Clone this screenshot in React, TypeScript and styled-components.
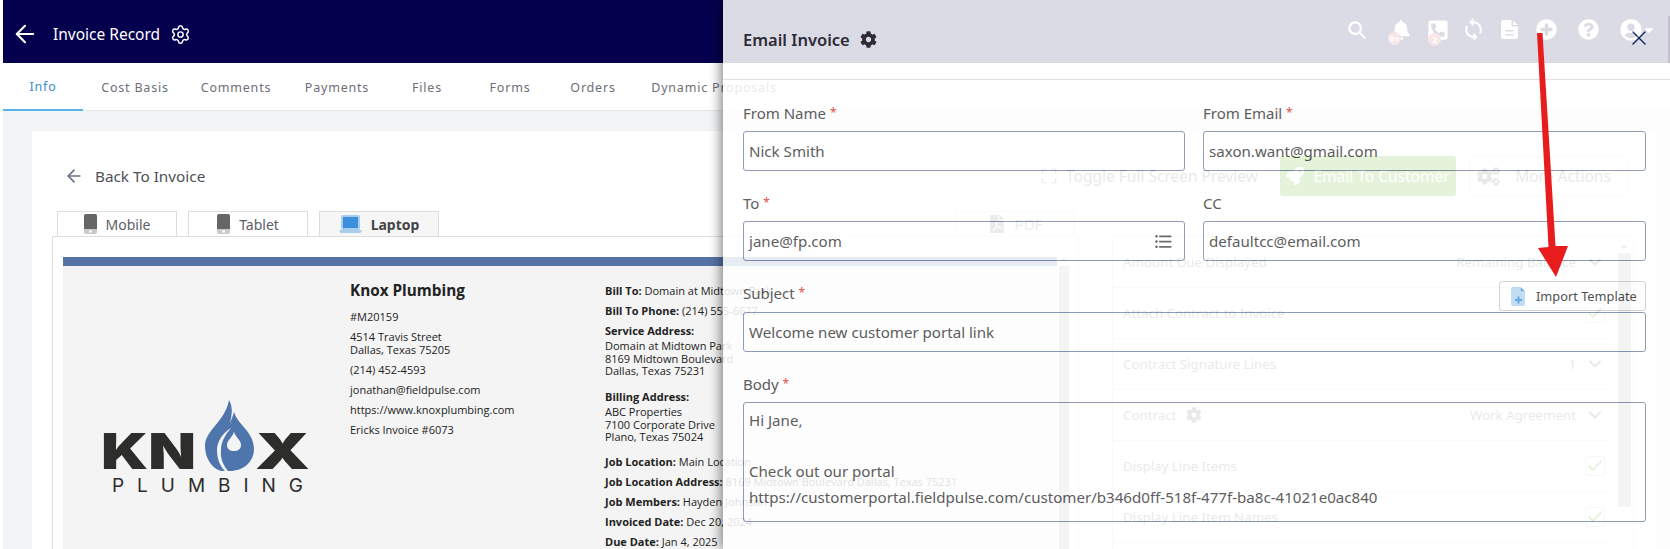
import styled, { createGlobalStyle } from "styled-components";
import { Settings, ArrowLeft, X, Check, ChevronDown, Maximize } from "lucide-react";
import { FaBell, FaCog, FaCogs, FaPhoneSquareAlt, FaPlusCircle, FaQuestionCircle, FaRocket, FaUserCircle, FaCaretDown, FaFilePdf } from "react-icons/fa";
import { MdFormatListBulleted, MdSync } from "react-icons/md";

const UI_FONT = `"Noto Sans", "Open Sans", sans-serif`;
const DOC_FONT = `"Open Sans", "Noto Sans", sans-serif`;

const GlobalStyle = createGlobalStyle`
  html, body {
    margin: 0;
    padding: 0;
    background: #fff;
  }
  * {
    box-sizing: border-box;
  }
`;

const tabs = [
  { label: "Info", width: 80 },
  { label: "Cost Basis", width: 104 },
  { label: "Comments", width: 98 },
  { label: "Payments", width: 104 },
  { label: "Files", width: 76 },
  { label: "Forms", width: 90 },
  { label: "Orders", width: 76 },
  { label: "Dynamic Proposals", width: 166 },
];

const settingRows = [
  { label: "Amount Due Displayed", value: "Remaining Balance", kind: "select" },
  { label: "Attach Contract to Invoice", kind: "check" },
  { label: "Contract Signature Lines", value: "1", kind: "select" },
  { label: "Contract", value: "Work Agreement", kind: "select", gear: true },
  { label: "Display Line Items", kind: "check" },
  { label: "Display Line Item Names", kind: "check" },
];

function SearchIcon() {
  return (
    <svg width="18" height="18" viewBox="0 0 18 18" fill="none" stroke="#fff" strokeWidth="2.300" strokeLinecap="round">
      <circle cx="7.200" cy="7.200" r="5.800" />
      <path d="M11.500 11.500L16.800 16.800" />
    </svg>
  );
}

function NoteIcon() {
  return (
    <svg width="17" height="19" viewBox="0 0 17 19">
      <path
        fill="#fff"
        fillRule="evenodd"
        d="M2 0h8.500v5.500a1 1 0 0 0 1 1H17V17a2 2 0 0 1-2 2H2a2 2 0 0 1-2-2V2a2 2 0 0 1 2-2zM4.500 10v1.600h8V10zM4.500 14v1.600h8V14z"
      />
      <path fill="#fff" d="M12 0.500L16.700 5H12z" />
    </svg>
  );
}

function PhoneIcon() {
  return (
    <svg width="13" height="20" viewBox="0 0 13 20">
      <rect x="0" y="0" width="13" height="20" rx="2" fill="#c9c9c9" />
      <path d="M2 0h9a2 2 0 0 1 2 2v13H0V2a2 2 0 0 1 2-2z" fill="#666" />
      <rect x="5" y="16.500" width="3" height="2" fill="#fff" />
    </svg>
  );
}

function LaptopIcon() {
  return (
    <svg width="23" height="18" viewBox="0 0 23 18">
      <rect x="2" y="0" width="19" height="15" rx="2" fill="#a9cdec" />
      <rect x="4" y="2" width="15" height="11" fill="#3b8fdc" />
      <path d="M0 15h23l-1.500 3H1.500z" fill="#a9cdec" />
    </svg>
  );
}

function KnoxLogo() {
  return (
    <LogoSvg width="207" height="94" viewBox="0 0 207 94">
      <text x="-2" y="69" fontFamily="Inter, sans-serif" fontWeight="900" fontSize="49.500" fill="#2d2d2b" textLength="95" lengthAdjust="spacingAndGlyphs">KN</text>
      <text x="152" y="69" fontFamily="Inter, sans-serif" fontWeight="900" fontSize="49.500" fill="#2d2d2b" textLength="55" lengthAdjust="spacingAndGlyphs">X</text>
      <path
        d="M126 0C131 9 128 17 127 24C128 20 130 16 131 12C135 25 151 32 151 49C151 62 140 71 127 71L118 71C108 68 102 57 102 46C102 30 122 22 126 0Z"
        fill="#4e76ad"
      />
      <path d="M128 28C120 33 114 41 114 50C114 59 117 66 122 71L125 71C120 65 117 58 118 50C118 42 122 35 128 28Z" fill="#f4f4f4" />
      <path d="M131 32C133 38 138 40 138 45C138 49 135 51 131 51C127 51 124 49 124 45C124 40 129 38 131 32Z" fill="#f4f4f4" />
      <text x="9" y="92" fontFamily="Inter, sans-serif" fontWeight="400" fontSize="19" fill="#2d2d2b" textLength="191">PLUMBING</text>
    </LogoSvg>
  );
}

function ImportIcon() {
  return (
    <svg width="14" height="19" viewBox="0 0 14 19">
      <path d="M2 0h7v5h5v12a2 2 0 0 1-2 2H2a2 2 0 0 1-2-2V2a2 2 0 0 1 2-2z" fill="#b9d8f2" />
      <path d="M9.500 0L14 4.500H9.500z" fill="#4a9be0" />
      <path d="M6.500 9.500h2v2.500H11v2H8.500v2.500h-2V14H4v-2h2.500z" fill="#4a9be0" />
    </svg>
  );
}

export default function App() {
  return (
    <>
      <GlobalStyle />
      <Screen>
        <Page>
          <TopBar>
            <BackArrow><ArrowLeft size={28} color="#fff" strokeWidth={1.8} /></BackArrow>
            <TopTitle>Invoice Record</TopTitle>
            <Settings size={21} color="#fff" strokeWidth={1.7} />
            <TopIcons>
              <IconSlot $gap={0}><SearchIcon /></IconSlot>
              <IconSlot $gap={25}>
                <FaBell size={20} />
                <Badge $left={-3}>9+</Badge>
              </IconSlot>
              <IconSlot $gap={16}>
                <FaPhoneSquareAlt size={22} />
                <Badge $left={1}>2</Badge>
              </IconSlot>
              <IconSlot $gap={12}><MdSync size={25} /></IconSlot>
              <IconSlot $gap={15}><NoteIcon /></IconSlot>
              <IconSlot $gap={18}><FaPlusCircle size={21} /></IconSlot>
              <IconSlot $gap={21}><FaQuestionCircle size={21} /></IconSlot>
              <IconSlot $gap={21}>
                <FaUserCircle size={22} />
                <FaCaretDown size={14} />
              </IconSlot>
            </TopIcons>
          </TopBar>

          <TabBar>
            {tabs.map((t, i) => (
              <TabItem key={t.label} $active={i === 0} $width={t.width}>{t.label}</TabItem>
            ))}
          </TabBar>

          <Content>
            <Card>
              <TopRow>
                <BackLink>
                  <ArrowLeft size={20} color="#6b7280" strokeWidth={2} />
                  Back To Invoice
                </BackLink>
                <Actions>
                  <ToggleLink>
                    <Maximize size={18} strokeWidth={1.6} />
                    Toggle Full Screen Preview
                  </ToggleLink>
                  <EmailButton>
                    <FaRocket size={18} />
                    Email To Customer
                  </EmailButton>
                  <MoreButton>
                    <FaCogs size={23} />
                    More Actions
                  </MoreButton>
                </Actions>
              </TopRow>

              <Columns>
                <PreviewColumn>
                  <DeviceRow>
                    <DeviceTab><PhoneIcon />Mobile</DeviceTab>
                    <DeviceTab><PhoneIcon />Tablet</DeviceTab>
                    <DeviceTab $active><LaptopIcon />Laptop</DeviceTab>
                    <PdfTab><FaFilePdf size={18} />PDF</PdfTab>
                  </DeviceRow>
                  <PreviewBox>
                    <DocScroll>
                      <DocBar />
                      <Doc>
                        <LogoCell><KnoxLogo /></LogoCell>
                        <CompanyCell>
                          <CompanyName>Knox Plumbing</CompanyName>
                          <DocPara>#M20159</DocPara>
                          <DocPara>4514 Travis Street<br />Dallas, Texas 75205</DocPara>
                          <DocPara>(214) 452-4593</DocPara>
                          <DocPara>jonathan@fieldpulse.com</DocPara>
                          <DocPara>https://www.knoxplumbing.com</DocPara>
                          <DocPara>Ericks Invoice #6073</DocPara>
                        </CompanyCell>
                        <BillCell>
                          <DocPara><b>Bill To:</b> Domain at Midtown Park</DocPara>
                          <DocPara><b>Bill To Phone:</b> (214) 555-6677</DocPara>
                          <DocPara><b>Service Address:</b></DocPara>
                          <AddressPara>Domain at Midtown Park<br />8169 Midtown Boulevard<br />Dallas, Texas 75231</AddressPara>
                          <DocPara><b>Billing Address:</b></DocPara>
                          <AddressPara $tail={11}>ABC Properties<br />7100 Corporate Drive<br />Plano, Texas 75024</AddressPara>
                          <DocPara><b>Job Location:</b> Main Location</DocPara>
                          <DocPara><b>Job Location Address:</b> 8169 Midtown Boulevard Dallas, Texas 75231</DocPara>
                          <DocPara><b>Job Members:</b> Hayden Johnson</DocPara>
                          <DocPara><b>Invoiced Date:</b> Dec 20, 2024</DocPara>
                          <DocPara><b>Due Date:</b> Jan 4, 2025</DocPara>
                        </BillCell>
                      </Doc>
                    </DocScroll>
                    <DocScrollbar />
                  </PreviewBox>
                </PreviewColumn>

                <SettingsPanel>
                  {settingRows.map((r) => (
                    <SettingRow key={r.label}>
                      <SettingLabel>
                        {r.label}
                        {r.gear && <FaCog size={16} />}
                      </SettingLabel>
                      {r.kind === "check" ? (
                        <CheckBox><Check size={18} color="#62b000" strokeWidth={2.4} /></CheckBox>
                      ) : (
                        <SettingValue>
                          {r.value}
                          <ChevronDown size={20} strokeWidth={2.4} />
                        </SettingValue>
                      )}
                    </SettingRow>
                  ))}
                  <PanelScrollbar />
                </SettingsPanel>
              </Columns>
            </Card>
          </Content>
        </Page>

        <Drawer>
          <DrawerHead>
            <DrawerTitle>
              Email Invoice
              <FaCog size={17} />
            </DrawerTitle>
            <CloseButton><X size={24} strokeWidth={1.4} /></CloseButton>
          </DrawerHead>
          <Form>
            <FieldPair>
              <Field>
                <FieldLabel>From Name <Req>*</Req></FieldLabel>
                <InputBox>Nick Smith</InputBox>
              </Field>
              <Field>
                <FieldLabel>From Email <Req>*</Req></FieldLabel>
                <InputBox>saxon.want@gmail.com</InputBox>
              </Field>
            </FieldPair>
            <FieldPair>
              <Field>
                <FieldLabel>To <Req>*</Req></FieldLabel>
                <InputBox>
                  jane@fp.com
                  <MdFormatListBulleted size={21} color="#555" />
                </InputBox>
              </Field>
              <Field>
                <FieldLabel>CC</FieldLabel>
                <InputBox>defaultcc@email.com</InputBox>
              </Field>
            </FieldPair>
            <Field>
              <SubjectHead>
                <FieldLabel>Subject <Req>*</Req></FieldLabel>
                <ImportButton>
                  <ImportIcon />
                  Import Template
                </ImportButton>
              </SubjectHead>
              <InputBox>Welcome new customer portal link</InputBox>
            </Field>
            <Field>
              <FieldLabel>Body <Req>*</Req></FieldLabel>
              <BodyBox>
                {"Hi Jane,\n\nCheck out our portal\nhttps://customerportal.fieldpulse.com/customer/b346d0ff-518f-477f-ba8c-41021e0ac840"}
              </BodyBox>
            </Field>
          </Form>
        </Drawer>

        <DrawerScrollThumb />

        <Annotation width="36" height="250" viewBox="0 0 36 250">
          <path d="M1 1L6.500 1L19.500 214L32 214L20 245L2 216L12.500 215Z" fill="#e81c1c" />
        </Annotation>
      </Screen>
    </>
  );
}

const Screen = styled.div`
  position: relative;
  width: 1670px;
  height: 549px;
  overflow: hidden;
  background: #fff;
`;

const Page = styled.div`
  padding-left: 3px;
  height: 549px;
  overflow: hidden;
`;

const TopBar = styled.header`
  display: flex;
  align-items: center;
  height: 63px;
  padding: 5px 14px 0 14px;
  background: #05004e;
  color: #fff;
`;

const BackArrow = styled.div`
  display: flex;
  margin-left: -6px;
`;

const TopTitle = styled.div`
  margin: 0 10px 0 14px;
  font: 400 15.5px ${UI_FONT};
`;

const TopIcons = styled.div`
  display: flex;
  align-items: center;
  margin-left: auto;
  margin-top: -9px;
  color: #fff;
`;

const IconSlot = styled.div<{ $gap: number }>`
  position: relative;
  display: flex;
  align-items: center;
  margin-left: ${(p) => p.$gap}px;
`;

const Badge = styled.span<{ $left: number }>`
  position: absolute;
  left: ${(p) => p.$left}px;
  bottom: -5px;
  min-width: 13px;
  height: 13px;
  border-radius: 50%;
  background: #d9534f;
  color: #fff;
  font: 700 9px/13px ${UI_FONT};
  text-align: center;
`;

const TabBar = styled.nav`
  display: flex;
  height: 48px;
  background: #fff;
  border-bottom: 1px solid #e4e6ea;
`;

const TabItem = styled.div<{ $active?: boolean; $width: number }>`
  display: flex;
  align-items: center;
  justify-content: center;
  width: ${(p) => p.$width}px;
  margin-bottom: -1px;
  font: 400 12.5px ${UI_FONT};
  letter-spacing: 0.8px;
  color: ${(p) => (p.$active ? "#3d8ecb" : "#6d6e78")};
  border-bottom: ${(p) => (p.$active ? "2px solid #5ab3e6" : "none")};
`;

const Content = styled.main`
  height: 438px;
  padding: 20px 13px 0 29px;
  background: #f3f4f6;
`;

const Card = styled.section`
  height: 418px;
  padding: 25px 20px 0;
  background: #fff;
`;

const TopRow = styled.div`
  display: flex;
  align-items: center;
  justify-content: space-between;
  height: 40px;
  padding-right: 8px;
`;

const BackLink = styled.div`
  display: flex;
  align-items: center;
  gap: 11px;
  padding-left: 12px;
  font: 400 15.3px ${UI_FONT};
  color: #4f5058;
`;

const Actions = styled.div`
  display: flex;
  align-items: center;
  height: 40px;
`;

const ToggleLink = styled.div`
  display: flex;
  align-items: center;
  gap: 8px;
  margin-right: 22px;
  font: 400 15.5px ${UI_FONT};
  color: #666;
`;

const EmailButton = styled.div`
  display: flex;
  align-items: center;
  justify-content: center;
  gap: 9px;
  width: 176px;
  height: 40px;
  border-radius: 3px;
  background: #54ab05;
  color: #fff;
  font: 400 15.5px ${UI_FONT};
`;

const MoreButton = styled.div`
  display: flex;
  align-items: center;
  justify-content: center;
  gap: 15px;
  width: 160px;
  height: 40px;
  margin-left: 13px;
  padding-right: 10px;
  border: 1px solid #ddd;
  border-radius: 3px;
  color: #666;
  font: 400 15.5px ${UI_FONT};
`;

const Columns = styled.div`
  display: flex;
  gap: 33px;
  margin-top: 15px;
`;

const PreviewColumn = styled.div`
  width: 1027px;
`;

const DeviceRow = styled.div`
  display: flex;
  gap: 11px;
  height: 25px;
  padding-left: 5px;
`;

const DeviceTab = styled.div<{ $active?: boolean }>`
  display: flex;
  align-items: center;
  justify-content: center;
  gap: 9px;
  width: 120px;
  height: 26px;
  border: 1px solid #ddd;
  background: ${(p) => (p.$active ? "#f6f6f6" : "#fff")};
  color: ${(p) => (p.$active ? "#444" : "#5d5d66")};
  font: ${(p) => (p.$active ? 700 : 400)} 14px ${UI_FONT};
`;

const PdfTab = styled(DeviceTab)`
  margin-left: auto;
  margin-right: 4px;
  color: #777;
  font-size: 15px;
`;

const PreviewBox = styled.div`
  position: relative;
  display: flex;
  height: 320px;
  padding: 20px 0 0 10px;
  border: 1px solid #ddd;
  background: #fff;
`;

const DocScroll = styled.div`
  width: 994px;
  overflow: hidden;
`;

const DocBar = styled.div`
  height: 9px;
  background: #5573a6;
`;

const Doc = styled.div`
  display: grid;
  grid-template-columns: 287px 255px 1fr;
  height: 290px;
  background: #f4f4f4;
  font: 400 11px/13px ${DOC_FONT};
  color: #222;
`;

const LogoCell = styled.div`
  padding: 134px 0 0 40px;
`;

const LogoSvg = styled.svg`
  overflow: visible;
`;

const CompanyCell = styled.div`
  padding-top: 14px;
`;

const CompanyName = styled.div`
  margin-bottom: 10px;
  font: 700 15.3px/20px ${DOC_FONT};
  color: #222;
`;

const DocPara = styled.div`
  margin-bottom: 7px;
  b {
    font-weight: 700;
  }
`;

const BillCell = styled.div`
  padding-top: 18px;
  white-space: nowrap;
`;

const AddressPara = styled.div<{ $tail?: number }>`
  margin: -4px 0 ${(p) => p.$tail ?? 12.75}px;
  line-height: 12.5px;
`;

const ScrollArrow = `
  content: "";
  position: absolute;
  top: -9px;
  left: 1px;
  border-left: 4px solid transparent;
  border-right: 4px solid transparent;
  border-bottom: 4px solid #b4b6bd;
`;

const DocScrollbar = styled.div`
  position: relative;
  width: 10px;
  margin: 9px 0 0 2px;
  background: #b4b6bd;
  &::before {
    ${ScrollArrow}
  }
`;

const SettingsPanel = styled.aside`
  position: relative;
  width: 522px;
  height: 320px;
  margin-top: 25px;
  border: 1px solid #e2e2e2;
`;

const SettingRow = styled.div`
  display: flex;
  align-items: center;
  justify-content: space-between;
  width: 499px;
  height: 51px;
  padding: 0 7px 0 10px;
  border-bottom: 1px solid #ddd;
  font: 400 13.3px ${UI_FONT};
  color: #666;
`;

const SettingLabel = styled.div`
  display: flex;
  align-items: center;
  gap: 10px;
`;

const SettingValue = styled.div`
  display: flex;
  align-items: center;
  gap: 9px;
`;

const CheckBox = styled.div`
  display: flex;
  align-items: center;
  justify-content: center;
  width: 20px;
  height: 20px;
  border: 1px solid #ccc;
  border-radius: 3px;
`;

const PanelScrollbar = styled.div`
  position: absolute;
  top: 16px;
  right: 2px;
  width: 13px;
  height: 254px;
  background: #b4b6bd;
  &::before {
    ${ScrollArrow}
    left: 2px;
  }
`;

const Drawer = styled.aside`
  position: absolute;
  top: 0;
  right: 0;
  bottom: 0;
  width: 947px;
  background: #fff;
  opacity: 0.86;
  box-shadow: -3px 0 10px rgba(0, 0, 0, 0.5);
  font-family: ${UI_FONT};
`;

const DrawerHead = styled.div`
  display: flex;
  align-items: center;
  justify-content: space-between;
  height: 80px;
  padding: 0 24px 0 20px;
  border-bottom: 1px solid #dcdcdc;
`;

const DrawerTitle = styled.h2`
  display: flex;
  align-items: center;
  gap: 10px;
  margin: 0;
  font: 600 16.5px ${UI_FONT};
  color: #333;
`;

const CloseButton = styled.div`
  display: flex;
  margin: -4px -5px 0 0;
  color: #0d2a5c;
`;

const Form = styled.div`
  display: flex;
  flex-direction: column;
  gap: 21px;
  padding: 22px 24px 0 20px;
`;

const FieldPair = styled.div`
  display: grid;
  grid-template-columns: 442px 443px;
  gap: 18px;
`;

const Field = styled.div`
  display: flex;
  flex-direction: column;
`;

const FieldLabel = styled.label`
  display: block;
  height: 22px;
  margin-bottom: 7px;
  font: 400 15px/22px ${UI_FONT};
  color: #444;
`;

const Req = styled.span`
  position: relative;
  top: -2px;
  font-size: 12px;
  line-height: 0;
  color: #e0352b;
`;

const SubjectHead = styled.div`
  display: flex;
  justify-content: space-between;
  height: 30px;
`;

const ImportButton = styled.div`
  display: flex;
  align-items: center;
  gap: 11px;
  width: 147px;
  height: 30px;
  margin-top: -1px;
  padding-left: 11px;
  border: 1px solid #ccc;
  border-radius: 3px;
  font: 400 12.8px ${UI_FONT};
  color: #333;
`;

const InputBox = styled.div`
  display: flex;
  align-items: center;
  justify-content: space-between;
  flex: none;
  height: 40px;
  padding: 0 10px 0 5px;
  border: 1px solid #7f8cab;
  border-radius: 3px;
  font: 400 15.1px ${UI_FONT};
  color: #444;
`;

const BodyBox = styled.div`
  height: 120px;
  padding: 5px;
  border: 1px solid #7f8cab;
  border-radius: 3px;
  font: 400 15.1px/25.5px ${UI_FONT};
  color: #444;
  white-space: pre-wrap;
`;

const DrawerScrollThumb = styled.div`
  position: absolute;
  top: 16px;
  right: 0;
  width: 2px;
  height: 47px;
  background: #c4c2cf;
`;

const Annotation = styled.svg`
  position: absolute;
  left: 1536px;
  top: 32px;
`;
